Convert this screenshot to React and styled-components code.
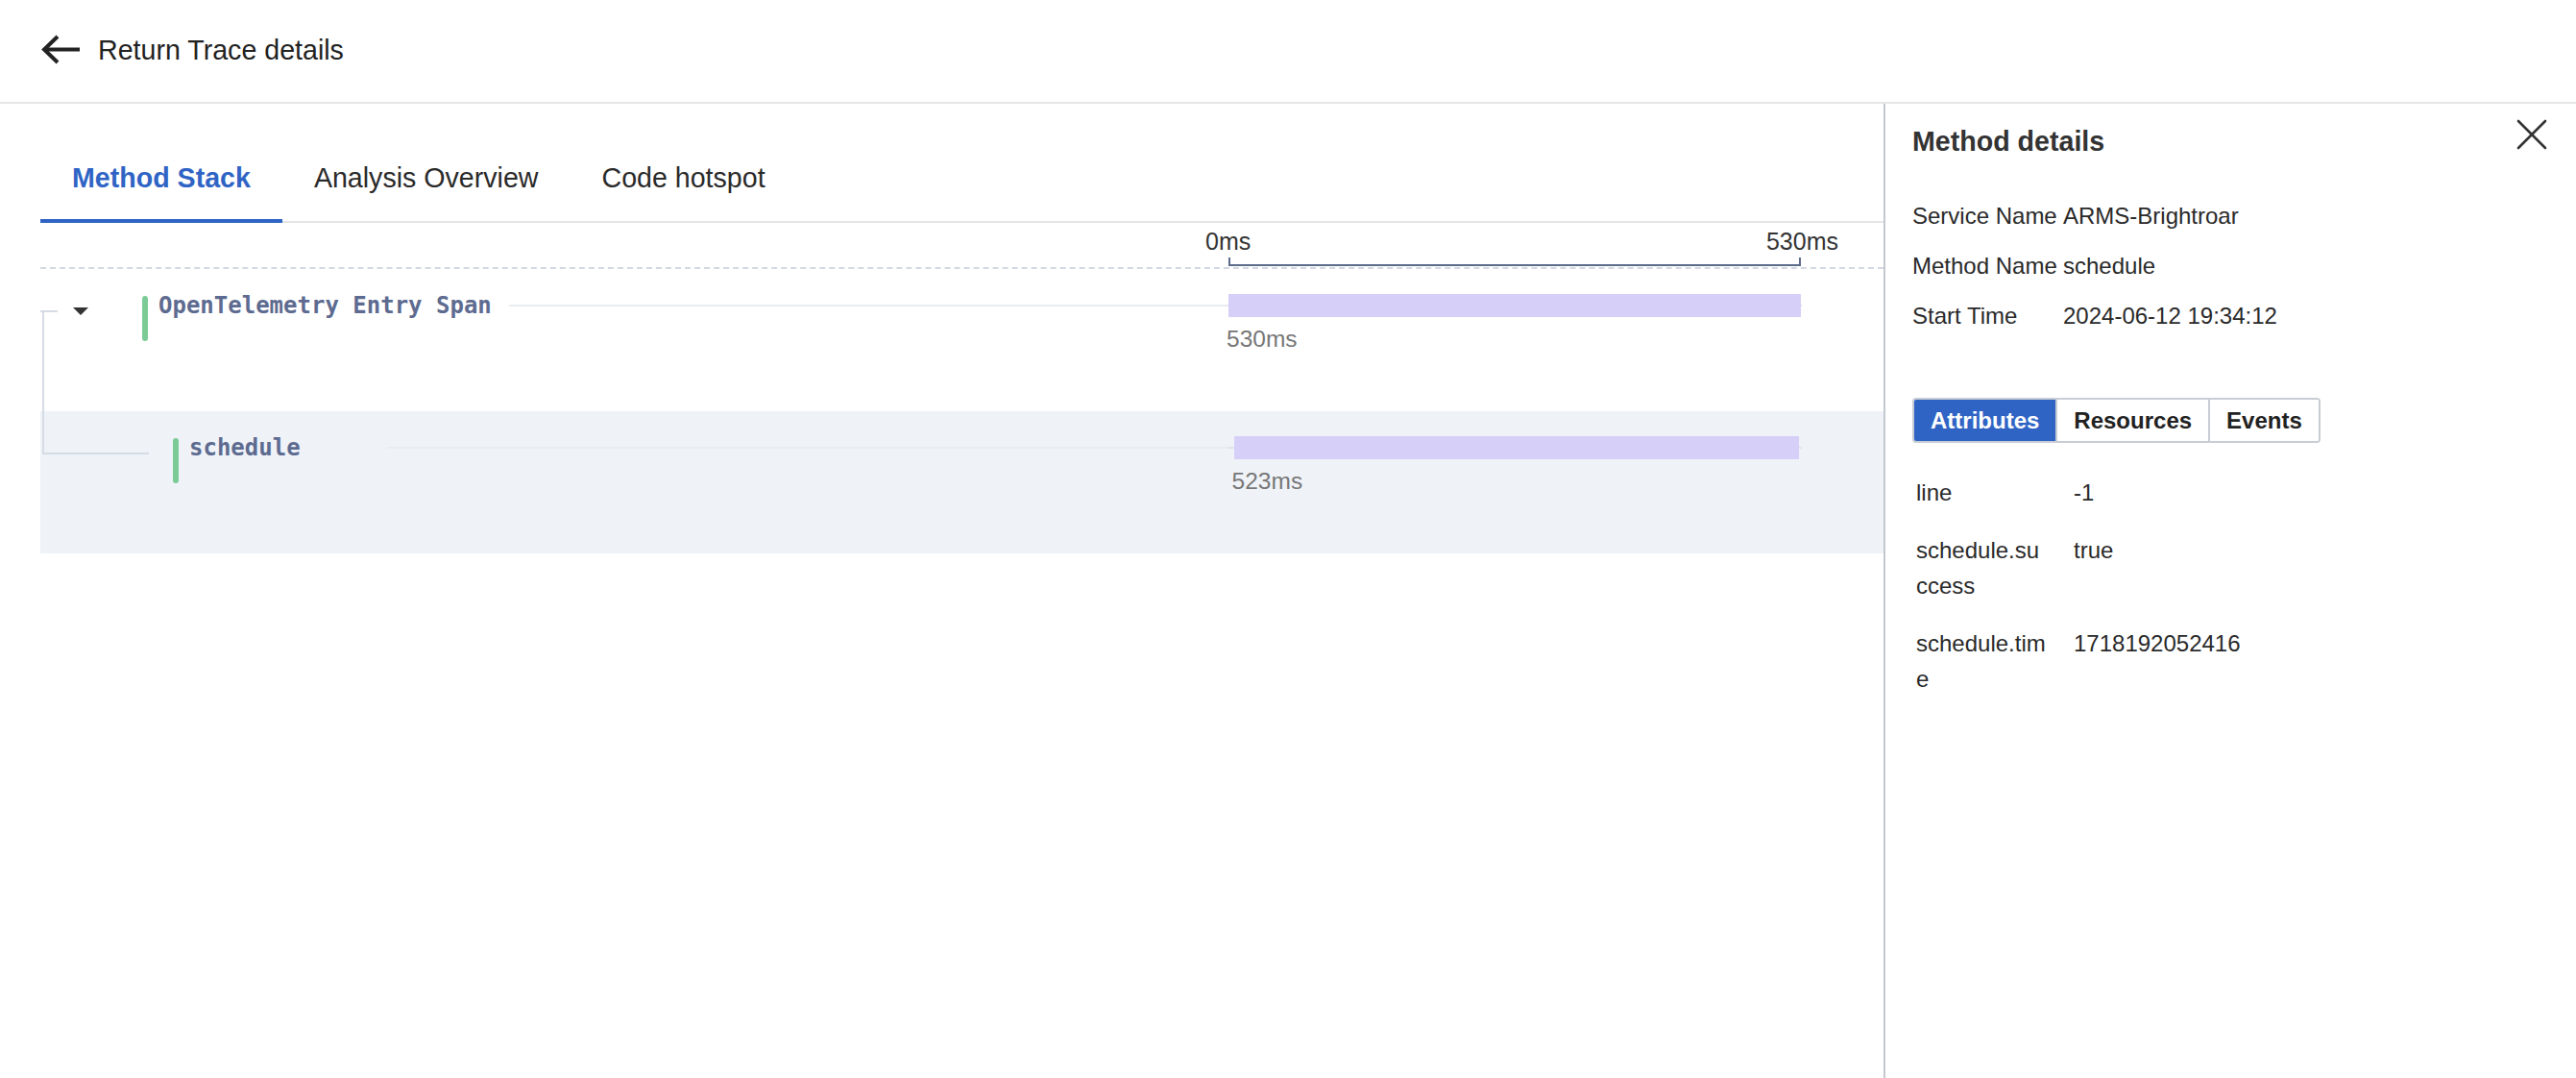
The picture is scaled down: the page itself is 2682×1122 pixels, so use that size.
import React, { useState } from 'react'
import styled, { createGlobalStyle } from 'styled-components'

const GlobalStyle = createGlobalStyle`
  html, body {
    margin: 0;
    padding: 0;
    background: #fff;
  }
  body {
    font-family: "Liberation Sans", Arial, Helvetica, sans-serif;
    color: #333;
  }
  * { box-sizing: border-box; }
`

const Page = styled.div`
  display: flex;
  flex-direction: column;
  height: 100vh;
  background: #fff;
`

const Header = styled.header`
  height: 108px;
  flex: 0 0 108px;
  display: flex;
  align-items: center;
  gap: 19px;
  padding: 0 0 2px 43px;
  border-bottom: 2px solid #e6e6e6;
`

const BackButton = styled.button`
  border: 0;
  background: none;
  padding: 0;
  display: flex;
  cursor: pointer;
`

const HeaderTitle = styled.div`
  font-size: 28.6px;
  color: #222;
`

const Body = styled.div`
  flex: 1;
  display: flex;
  min-height: 0;
`

const Main = styled.div`
  flex: 1;
  padding-left: 42px;
`

const TabBar = styled.div`
  display: flex;
  margin-top: 50px;
  border-bottom: 2px solid #e4e4e4;
`

const Tab = styled.div`
  font-size: 28.6px;
  line-height: 54px;
  padding: 0 33px 16px;
  margin-bottom: -2px;
  font-weight: ${p => p.active ? 700 : 400};
  color: ${p => p.active ? '#2f64c5' : '#2a2a2a'};
  border-bottom: 4px solid ${p => p.active ? '#2f64c5' : 'transparent'};
  cursor: pointer;
`

const Grid = styled.div`
  display: grid;
  grid-template-columns: 1237px 596px 1fr;
`

const ScaleHeader = styled(Grid)`
  padding-top: 4px;
  height: 48px;
  border-bottom: 2px dashed #d3d9e2;
`

const Ruler = styled.div`
  display: flex;
  flex-direction: column;
`

const RulerLabels = styled.div`
  display: flex;
  justify-content: space-between;
  margin: 0 -39px 0 -24px;
  font-size: 25px;
  line-height: 30px;
  color: #333;
`

const RulerLine = styled.div`
  margin-top: 2px;
  height: 9px;
  border: 2px solid #5b6b8b;
  border-top: 0;
`

const Row = styled(Grid)`
  position: relative;
  height: 148px;
  background: ${p => p.selected ? '#eff3f8' : 'transparent'};
`

const NameCell = styled.div`
  display: flex;
  align-items: flex-start;
  padding: 28px 0 0 ${p => p.indent}px;
`

const Caret = styled.div`
  width: 0;
  height: 0;
  margin: 12px 56px 0 0;
  border-left: 8px solid transparent;
  border-right: 8px solid transparent;
  border-top: 8px solid #333;
`

const KindMark = styled.div`
  flex: 0 0 6px;
  height: 47px;
  border-radius: 3px;
  background: #7ccb97;
`

const SpanName = styled.div`
  margin: -2px 0 0 11px;
  font-family: "DejaVu Sans Mono", "Liberation Mono", monospace;
  font-weight: 700;
  font-size: 24px;
  line-height: 24px;
  color: #5e6b90;
  white-space: nowrap;
`

const GuideLine = styled.div`
  flex: 1;
  height: 2px;
  margin: 9px 0 0 ${p => p.gap}px;
  background: #e9edf2;
`

const TreeTick = styled.div`
  position: absolute;
  left: 0;
  top: 43px;
  width: 18px;
  height: 2px;
  background: #d5dce6;
`

const TreeElbow = styled.div`
  position: absolute;
  left: 2px;
  top: -105px;
  width: 111px;
  height: 150px;
  border-left: 2px solid #d5dce6;
  border-bottom: 2px solid #d5dce6;
`

const BarCell = styled.div`
  position: relative;
  padding-top: 26px;
`

const Track = styled.div`
  position: absolute;
  left: -1px;
  right: -1px;
  top: 37px;
  height: 2px;
  background: #dfe4ec;
`

const Span = styled.div`
  position: relative;
`

const Bar = styled.div`
  height: 24px;
  background: #d6d0f8;
`

const Duration = styled.div`
  margin: 8px 0 0 -2px;
  font-size: 24.5px;
  line-height: 30px;
  color: #777;
`

const Panel = styled.aside`
  flex: 0 0 721px;
  border-left: 2px solid #c3c7cf;
  padding: 16px 28px 0;
`

const PanelHeader = styled.div`
  display: flex;
  justify-content: space-between;
  align-items: flex-start;
`

const PanelTitle = styled.div`
  margin-top: 3px;
  font-size: 28.6px;
  line-height: 40px;
  font-weight: 700;
  color: #333;
`

const CloseButton = styled.button`
  border: 0;
  background: none;
  padding: 0;
  margin-right: 2px;
  display: flex;
  cursor: pointer;
`

const InfoList = styled.div`
  display: grid;
  grid-template-columns: 157px 1fr;
  row-gap: 20px;
  margin-top: 42px;
  font-size: 24px;
  line-height: 32px;
  color: #2a2a2a;
`

const Segmented = styled.div`
  display: inline-flex;
  margin-top: 69px;
  border: 2px solid #c8ccd4;
  border-radius: 4px;
  overflow: hidden;
`

const Segment = styled.div`
  padding: 0 17px;
  font-size: 24px;
  line-height: 43px;
  font-weight: 700;
  color: ${p => p.active ? '#fff' : '#222'};
  background: ${p => p.active ? '#2f64c5' : '#fff'};
  & + & {
    border-left: 2px solid #c8ccd4;
  }
`

const AttrTable = styled.div`
  display: grid;
  grid-template-columns: 138px 1fr;
  column-gap: 26px;
  row-gap: 23px;
  margin-top: 33px;
  padding-left: 4px;
  font-size: 24px;
  line-height: 37px;
  color: #2a2a2a;
`

const AttrKey = styled.div`
  word-break: break-all;
`

const BackArrow = () => (
  <svg width="40" height="32" viewBox="0 0 40 32" fill="none" stroke="#222" strokeWidth="4" strokeLinejoin="miter">
    <path d="M3 15.5H40" />
    <path d="M17 2L3 15.5L17 29" />
  </svg>
)

const CloseIcon = () => (
  <svg width="32" height="32" viewBox="0 0 32 32" fill="none" stroke="#333" strokeWidth="2.6" strokeLinecap="round">
    <path d="M2 2L30 30" />
    <path d="M30 2L2 30" />
  </svg>
)

const TOTAL = 530

const spans = [
  { name: 'OpenTelemetry Entry Span', start: 0, duration: 530, indent: 34, toggle: true, gap: 18 },
  { name: 'schedule', start: 5, duration: 523, indent: 138, gap: 89, selected: true },
]

const attributes = [
  ['line', '-1'],
  ['schedule.success', 'true'],
  ['schedule.time', '1718192052416'],
]

const App = () => {
  const [tab, setTab] = useState('Method Stack')
  const [segment, setSegment] = useState('Attributes')

  return (
    <Page>
      <GlobalStyle />
      <Header>
        <BackButton><BackArrow /></BackButton>
        <HeaderTitle>Return Trace details</HeaderTitle>
      </Header>
      <Body>
        <Main>
          <TabBar>
            {['Method Stack', 'Analysis Overview', 'Code hotspot'].map(t => (
              <Tab key={t} active={t === tab} onClick={() => setTab(t)}>{t}</Tab>
            ))}
          </TabBar>
          <ScaleHeader>
            <div />
            <Ruler>
              <RulerLabels>
                <span>0ms</span>
                <span>{TOTAL}ms</span>
              </RulerLabels>
              <RulerLine />
            </Ruler>
          </ScaleHeader>
          {spans.map((s, i) => (
            <Row key={s.name} selected={s.selected}>
              {s.toggle && <TreeTick />}
              {i > 0 && <TreeElbow />}
              <NameCell indent={s.indent}>
                {s.toggle && <Caret />}
                <KindMark />
                <SpanName>{s.name}</SpanName>
                <GuideLine gap={s.gap} />
              </NameCell>
              <BarCell>
                <Track />
                <Span style={{ marginLeft: `${(s.start / TOTAL) * 100}%`, width: `${(s.duration / TOTAL) * 100}%` }}>
                  <Bar />
                  <Duration>{s.duration}ms</Duration>
                </Span>
              </BarCell>
              <div />
            </Row>
          ))}
        </Main>
        <Panel>
          <PanelHeader>
            <PanelTitle>Method details</PanelTitle>
            <CloseButton><CloseIcon /></CloseButton>
          </PanelHeader>
          <InfoList>
            <span>Service Name</span><span>ARMS-Brightroar</span>
            <span>Method Name</span><span>schedule</span>
            <span>Start Time</span><span>2024-06-12 19:34:12</span>
          </InfoList>
          <Segmented>
            {['Attributes', 'Resources', 'Events'].map(s => (
              <Segment key={s} active={s === segment} onClick={() => setSegment(s)}>{s}</Segment>
            ))}
          </Segmented>
          <AttrTable>
            {attributes.map(([k, v]) => (
              <React.Fragment key={k}>
                <AttrKey>{k}</AttrKey>
                <div>{v}</div>
              </React.Fragment>
            ))}
          </AttrTable>
        </Panel>
      </Body>
    </Page>
  )
}

export default App
